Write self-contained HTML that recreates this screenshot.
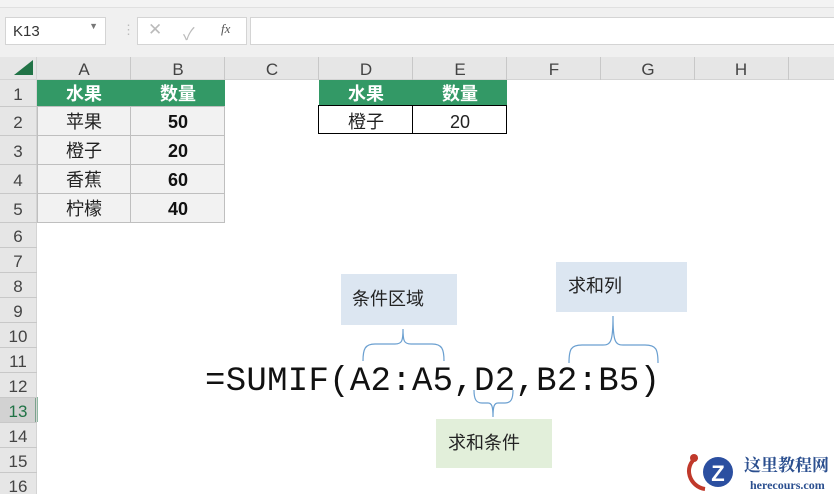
<!DOCTYPE html>
<html><head><meta charset="utf-8"><style>
*{margin:0;padding:0;box-sizing:border-box}
body{width:834px;height:494px;overflow:hidden;background:#fff;position:relative;font-family:"Liberation Sans","Noto Sans CJK SC",sans-serif}
.a{position:absolute}
.c{position:absolute;display:flex;align-items:center;justify-content:center;font-size:18px;color:#222}
</style></head><body>
<div class="a" style="left:0;top:0;width:834px;height:8px;background:#f3f3f3;border-bottom:1px solid #e0e0e0"></div>
<div class="a" style="left:0;top:8px;width:834px;height:49px;background:#f0f0f0"></div>
<div class="a" style="left:5px;top:17px;width:101px;height:28px;background:#fff;border:1px solid #d4d4d4;font-size:15px;color:#333;padding:5px 0 0 7px">K13<span style="position:absolute;right:7px;top:3px;font-size:9px;color:#777">▼</span></div>
<div class="a" style="left:122px;top:22px;color:#bbb;font-size:13px">⋮</div>
<div class="a" style="left:137px;top:17px;width:110px;height:28px;background:#fff;border:1px solid #d4d4d4"></div>
<div class="a" style="left:148px;top:20px;color:#bbb;font-size:17px">✕</div>
<div class="a" style="left:183px;top:20px;color:#bbb;font-size:17px">✓</div>
<div class="a" style="left:221px;top:21px;color:#555;font-size:13px;font-style:italic;font-family:'Liberation Serif',serif">fx</div>
<div class="a" style="left:250px;top:17px;width:590px;height:28px;background:#fff;border:1px solid #d4d4d4"></div>
<svg class="a" style="left:0;top:57px" width="834" height="437">
<rect x="0" y="0" width="834" height="23" fill="#e6e6e6"/>
<rect x="0" y="0" width="37" height="437" fill="#e6e6e6"/>
<rect x="0" y="340" width="37" height="25" fill="#d2d2d2"/>
<line x1="36.5" y1="340" x2="36.5" y2="365" stroke="#217346" stroke-width="2"/>
<polygon points="14,18 33,18 33,3" fill="#217346"/>
<g stroke="#d4d4d4" stroke-width="1">
<line x1="0" y1="22.5" x2="834" y2="22.5"/>
<line x1="36.5" y1="0" x2="36.5" y2="437"/>
</g>
<g stroke="#c8c8c8">
<line x1="130.5" y1="0" x2="130.5" y2="23"/><line x1="224.5" y1="0" x2="224.5" y2="23"/><line x1="318.5" y1="0" x2="318.5" y2="23"/><line x1="412.5" y1="0" x2="412.5" y2="23"/><line x1="506.5" y1="0" x2="506.5" y2="23"/><line x1="600.5" y1="0" x2="600.5" y2="23"/><line x1="694.5" y1="0" x2="694.5" y2="23"/><line x1="788.5" y1="0" x2="788.5" y2="23"/>
<line x1="0" y1="49.5" x2="37" y2="49.5"/><line x1="0" y1="78.5" x2="37" y2="78.5"/><line x1="0" y1="107.5" x2="37" y2="107.5"/><line x1="0" y1="136.5" x2="37" y2="136.5"/><line x1="0" y1="165.5" x2="37" y2="165.5"/><line x1="0" y1="190.5" x2="37" y2="190.5"/><line x1="0" y1="215.5" x2="37" y2="215.5"/><line x1="0" y1="240.5" x2="37" y2="240.5"/><line x1="0" y1="265.5" x2="37" y2="265.5"/><line x1="0" y1="290.5" x2="37" y2="290.5"/><line x1="0" y1="315.5" x2="37" y2="315.5"/><line x1="0" y1="340.5" x2="37" y2="340.5"/><line x1="0" y1="365.5" x2="37" y2="365.5"/><line x1="0" y1="390.5" x2="37" y2="390.5"/><line x1="0" y1="415.5" x2="37" y2="415.5"/>
</g>
<g font-size="17" fill="#444" text-anchor="middle" font-family="Liberation Sans">
<text x="84" y="18">A</text><text x="178" y="18">B</text><text x="272" y="18">C</text><text x="366" y="18">D</text><text x="460" y="18">E</text><text x="554" y="18">F</text><text x="648" y="18">G</text><text x="741" y="18">H</text>
<text x="18" y="43">1</text><text x="18" y="71">2</text><text x="18" y="100">3</text><text x="18" y="129">4</text><text x="18" y="158">5</text><text x="18" y="185">6</text><text x="18" y="210">7</text><text x="18" y="235">8</text><text x="18" y="260">9</text><text x="18" y="285">10</text><text x="18" y="310">11</text><text x="18" y="335">12</text><text x="18" y="360" fill="#217346">13</text><text x="18" y="385">14</text><text x="18" y="410">15</text><text x="18" y="435">16</text>
</g>
<rect x="37" y="23" width="188" height="26" fill="#339966"/>
<rect x="319" y="23" width="188" height="26" fill="#339966"/>
<rect x="37" y="49" width="188" height="116" fill="#f2f2f2"/>
<g stroke="#bfbfbf" fill="none"><rect x="37.5" y="49.5" width="187" height="116"/><line x1="130.5" y1="49" x2="130.5" y2="165"/><line x1="37" y1="78.5" x2="225" y2="78.5"/><line x1="37" y1="107.5" x2="225" y2="107.5"/><line x1="37" y1="136.5" x2="225" y2="136.5"/></g>
<g stroke="#000" fill="none"><rect x="318.5" y="48.5" width="188" height="28"/><line x1="412.5" y1="49" x2="412.5" y2="77"/></g>
<g font-size="18" text-anchor="middle" font-family="Liberation Sans, Noto Sans CJK SC, sans-serif">
<g fill="#fff" font-weight="bold"><text x="84" y="43">水果</text><text x="178" y="43">数量</text><text x="366" y="43">水果</text><text x="460" y="43">数量</text></g>
<g fill="#222"><text x="84" y="71">苹果</text><text x="84" y="100">橙子</text><text x="84" y="129">香蕉</text><text x="84" y="158">柠檬</text><text x="366" y="71">橙子</text><text x="460" y="71">20</text></g>
<g fill="#111" font-weight="bold"><text x="178" y="71">50</text><text x="178" y="100">20</text><text x="178" y="129">60</text><text x="178" y="158">40</text></g>
</g>
<rect x="341" y="217" width="116" height="51" fill="#dce6f1"/>
<rect x="556" y="205" width="131" height="50" fill="#dce6f1"/>
<rect x="436" y="362" width="116" height="49" fill="#e2efda"/>
<g font-size="18" fill="#222" font-family="Liberation Sans, Noto Sans CJK SC, sans-serif"><text x="352" y="248">条件区域</text><text x="568" y="235">求和列</text><text x="448" y="392">求和条件</text></g>
<g stroke="#6a9fd0" fill="none" stroke-width="1.2">
<path d="M363,304 C363,292 365,287 375,287 L395,287 C402,287 403,284 403,272 C403,284 404,287 411,287 L432,287 C442,287 444,292 444,304"/>
<path d="M569,306 C569,292 571,288 582,288 L603,288 C611,288 613,284 613,259 C613,284 615,288 623,288 L645,288 C656,288 658,292 658,306"/>
<path d="M474,333 C474,342 476,346 482,346 L488,346 C492,346 493,350 493,360 C493,350 494,346 498,346 L505,346 C511,346 513,342 513,333"/>
</g>
<text x="205" y="333" font-size="34" font-family="Liberation Mono, monospace" fill="#111" textLength="455">=SUMIF(A2:A5,D2,B2:B5)</text>
<path d="M697,400 C682,410 690,430 705,432" stroke="#c0392b" stroke-width="4" fill="none"/>
<circle cx="694" cy="401" r="4" fill="#c0392b"/>
<circle cx="718" cy="415" r="15" fill="#2b4fa0"/>
<text x="718" y="424" font-size="22" font-weight="bold" fill="#fff" text-anchor="middle" font-family="Liberation Sans">Z</text>
<text x="744" y="414" font-size="17" font-weight="bold" fill="#2b4f8f" font-family="Noto Serif CJK SC, serif">这里教程网</text>
<text x="750" y="432" font-size="12" font-weight="bold" fill="#2b4f8f" font-family="Liberation Serif, serif">herecours.com</text>
</svg>
</body></html>
